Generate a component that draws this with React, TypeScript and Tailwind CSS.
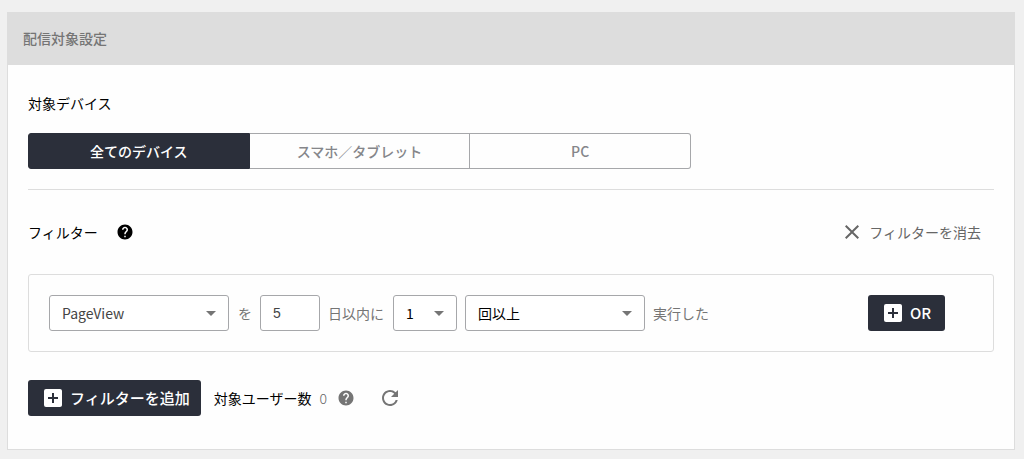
import { useState } from "react"
import type { ReactNode } from "react"
import { MdAddBox, MdArrowDropDown, MdClose, MdHelp, MdRefresh } from "react-icons/md"

const devices = ["全てのデバイス", "スマホ／タブレット", "PC"]

type SelectBoxProps = {
  label: string
  options: string[]
  className: string
}

function SelectBox({ label, options, className }: SelectBoxProps) {
  const [value, setValue] = useState(options[0])

  return (
    <div className={`relative shrink-0 ${className}`}>
      <select
        aria-label={label}
        className="h-9 w-full appearance-none rounded-[3px] border border-[#a6a7aa] bg-white pr-7 pl-3 outline-none"
        value={value}
        onChange={(e) => setValue(e.target.value)}
      >
        {options.map((option) => (
          <option key={option}>{option}</option>
        ))}
      </select>
      <MdArrowDropDown className="pointer-events-none absolute top-1.5 right-1.5 size-6 text-[#757575]" />
    </div>
  )
}

function DarkButton({ children }: { children: ReactNode }) {
  return (
    <button
      type="button"
      className="flex h-9 min-w-[77px] shrink-0 items-center gap-1.5 rounded-[3px] bg-[#2b2f3a] pr-[11px] pl-3.5 text-[15px] font-medium text-white"
    >
      <MdAddBox className="-m-px size-6" />
      {children}
    </button>
  )
}

export default function App() {
  const [device, setDevice] = useState(devices[0])
  const [days, setDays] = useState("5")

  return (
    <div className="bg-[#f0f0f0] pt-3 pr-[9px] pb-[9px] pl-[7px] font-['Noto_Sans_CJK_JP',sans-serif] text-sm text-black">
      <section className="border border-[#ddd] bg-[#fefefe]">
        <h2 className="bg-[#ddd] px-[15px] pt-[15px] pb-[17px] font-medium text-[#757575]">
          配信対象設定
        </h2>

        <div className="px-5 pt-7 pb-[33px]">
          <h3 id="device-label">対象デバイス</h3>
          <div
            role="group"
            aria-labelledby="device-label"
            className="mt-5 flex w-full max-w-[663px]"
          >
            {devices.map((name) => (
              <button
                key={name}
                type="button"
                aria-pressed={device === name}
                onClick={() => setDevice(name)}
                className={`h-9 flex-1 border-y border-r font-medium first:rounded-l-[3px] first:border-l last:rounded-r-[3px] ${
                  device === name
                    ? "border-[#2b2f3a] bg-[#2b2f3a] text-white"
                    : "border-[#a6a7aa] text-[#85868a]"
                }`}
              >
                {name}
              </button>
            ))}
          </div>

          <hr className="mt-5 border-[#ddd]" />

          <div className="mt-[30px] flex h-6 items-center">
            <h3>フィルター</h3>
            <button type="button" aria-label="フィルターのヘルプ" className="ml-[18px]">
              <MdHelp className="size-[18px]" />
            </button>
            <button
              type="button"
              className="mr-[13px] ml-auto flex items-center gap-[5px] text-[#666]"
            >
              <MdClose className="size-6" />
              フィルターを消去
            </button>
          </div>

          <div className="mt-[30px] flex items-center gap-2 rounded-[3px] border border-[#ddd] p-5 pr-12 text-[#757575]">
            <SelectBox
              label="イベント"
              options={["PageView"]}
              className="w-[180px] text-[#444]"
            />
            <span className="pl-px">を</span>
            <input
              type="text"
              aria-label="日数"
              className="h-9 w-[60px] rounded-[3px] border border-[#a6a7aa] bg-white px-3 font-['Liberation_Sans',sans-serif] text-[#444] outline-none"
              value={days}
              onChange={(e) => setDays(e.target.value)}
            />
            <span className="pr-px whitespace-nowrap">日以内に</span>
            <SelectBox label="回数" options={["1"]} className="w-16 text-black" />
            <SelectBox label="条件" options={["回以上"]} className="w-[180px] text-black" />
            <span className="mr-auto whitespace-nowrap">実行した</span>
            <DarkButton>OR</DarkButton>
          </div>

          <div className="mt-7 flex items-center">
            <DarkButton>フィルターを追加</DarkButton>
            <span className="ml-[13px]">対象ユーザー数</span>
            <span className="ml-2 font-light text-[#666]">0</span>
            <button
              type="button"
              aria-label="対象ユーザー数のヘルプ"
              className="ml-2.5 text-[#757575]"
            >
              <MdHelp className="size-[18px]" />
            </button>
            <button type="button" aria-label="更新" className="ml-[23px] text-[#757575]">
              <MdRefresh className="size-6" />
            </button>
          </div>
        </div>
      </section>
    </div>
  )
}
